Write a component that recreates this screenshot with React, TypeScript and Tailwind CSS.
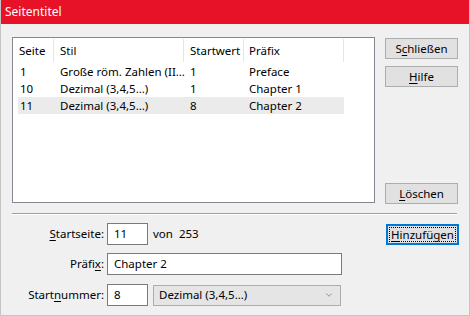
import { ChevronDown } from 'lucide-react';

const rows = [
  { seite: '1', stil: 'Große röm. Zahlen (II…', start: '1', prefix: 'Preface' },
  { seite: '10', stil: 'Dezimal (3,4,5…)', start: '1', prefix: 'Chapter 1' },
  { seite: '11', stil: 'Dezimal (3,4,5…)', start: '8', prefix: 'Chapter 2', selected: true },
];

function Btn({ pre, acc, post, className = '' }: { pre: string; acc: string; post: string; className?: string }) {
  return (
    <button
      className={`w-[73px] h-[21px] bg-[#e1e1e1] border border-[#adadad] text-black text-[11.5px] leading-none flex items-center justify-center ${className}`}
    >
      <span>
        {pre}
        <span className="underline underline-offset-2">{acc}</span>
        {post}
      </span>
    </button>
  );
}

export default function App() {
  return (
    <div
      className="w-[470px] h-[316px] bg-[#f0f0f0] text-[11.5px] text-black overflow-hidden border-l border-r border-b border-[#c4c4c4] flex flex-col"
      style={{ fontFamily: '"Noto Sans", "Segoe UI", sans-serif' }}
    >
      {/* Title bar */}
      <div className="h-[24px] shrink-0 bg-[#e81228] text-white flex items-center pl-[4px] pb-[1px] text-[12px]">
        Seitentitel
      </div>

      {/* List + side buttons */}
      <div className="flex pl-[11px] pt-[13px]">
        <div className="w-[363px] h-[166px] bg-white border border-[#828790] flex flex-col">
          <div className="flex h-[25px] items-center">
            <div className="w-[41px] h-[23px] pl-[6px] flex items-center border-r border-[#e5e5e5]">Seite</div>
            <div className="w-[130px] h-[23px] pl-[6px] flex items-center border-r border-[#e5e5e5]">Stil</div>
            <div className="w-[60px] h-[23px] pl-[6px] flex items-center border-r border-[#e5e5e5]">Startwert</div>
            <div className="w-[100px] h-[23px] pl-[5px] flex items-center border-r border-[#e5e5e5]">Präfix</div>
          </div>
          {rows.map((r) => (
            <div
              key={r.seite}
              className={`ml-[5px] w-[326px] h-[17px] flex items-center ${r.selected ? 'bg-[#ebebeb]' : ''}`}
            >
              <div className="w-[36px] pl-[2px]">{r.seite}</div>
              <div className="w-[130px] pl-[6px] whitespace-nowrap">{r.stil}</div>
              <div className="w-[60px] pl-[6px]">{r.start}</div>
              <div className="w-[100px] pl-[5px] whitespace-nowrap">{r.prefix}</div>
            </div>
          ))}
        </div>

        <div className="ml-[10px] flex flex-col h-[166px] pt-[1px]">
          <Btn pre="S" acc="c" post="hließen" />
          <Btn pre="" acc="H" post="ilfe" className="mt-[7px]" />
          <Btn pre="" acc="L" post="öschen" className="mt-auto mb-[-1px]" />
        </div>
      </div>

      {/* Separator */}
      <div className="ml-[11px] mt-[10px] w-[445px] h-[2px] border-t border-[#a0a0a0] border-b border-b-white" />

      {/* Form */}
      <div className="flex pl-[11px] pt-[8px]">
        <div className="w-[332px] flex flex-col gap-[8px]">
          <div className="flex items-center h-[22px]">
            <label className="w-[95px] text-right pr-[3px]">
              <span className="underline underline-offset-2">S</span>tartseite:
            </label>
            <div className="w-[41px] h-[22px] bg-white border border-[#7a7a7a] pl-[6px] flex items-center">11</div>
            <span className="ml-[5px]">von</span>
            <span className="ml-[6px]">253</span>
          </div>
          <div className="flex items-center h-[22px]">
            <label className="w-[95px] text-right pr-[3px]">
              Präfi<span className="underline underline-offset-2">x</span>:
            </label>
            <div className="w-[235px] h-[22px] bg-white border border-[#7a7a7a] pl-[6px] flex items-center">
              Chapter 2
            </div>
          </div>
          <div className="flex items-center h-[22px] mt-[1px]">
            <label className="w-[95px] text-right pr-[3px]">
              Start<span className="underline underline-offset-2">n</span>ummer:
            </label>
            <div className="w-[41px] h-[22px] bg-white border border-[#7a7a7a] pl-[6px] flex items-center">8</div>
            <div className="ml-[5px] w-[188px] h-[21px] bg-[#e5e5e5] border border-[#adadad] pl-[5px] pr-[6px] flex items-center justify-between">
              <span>Dezimal (3,4,5…)</span>
              <ChevronDown className="w-[10px] h-[10px] text-[#606060]" strokeWidth={1.5} />
            </div>
          </div>
        </div>

        <div className="ml-[42px] pt-[1px]">
          <button className="w-[73px] h-[21px] bg-[#e1e1e1] border-2 border-[#0078d7] flex items-center justify-center p-[1px]">
            <span className="w-full h-full border border-dotted border-black flex items-center justify-center text-[11.5px] leading-none">
              <span>
                <span className="underline underline-offset-2">H</span>inzufügen
              </span>
            </span>
          </button>
        </div>
      </div>
    </div>
  );
}
